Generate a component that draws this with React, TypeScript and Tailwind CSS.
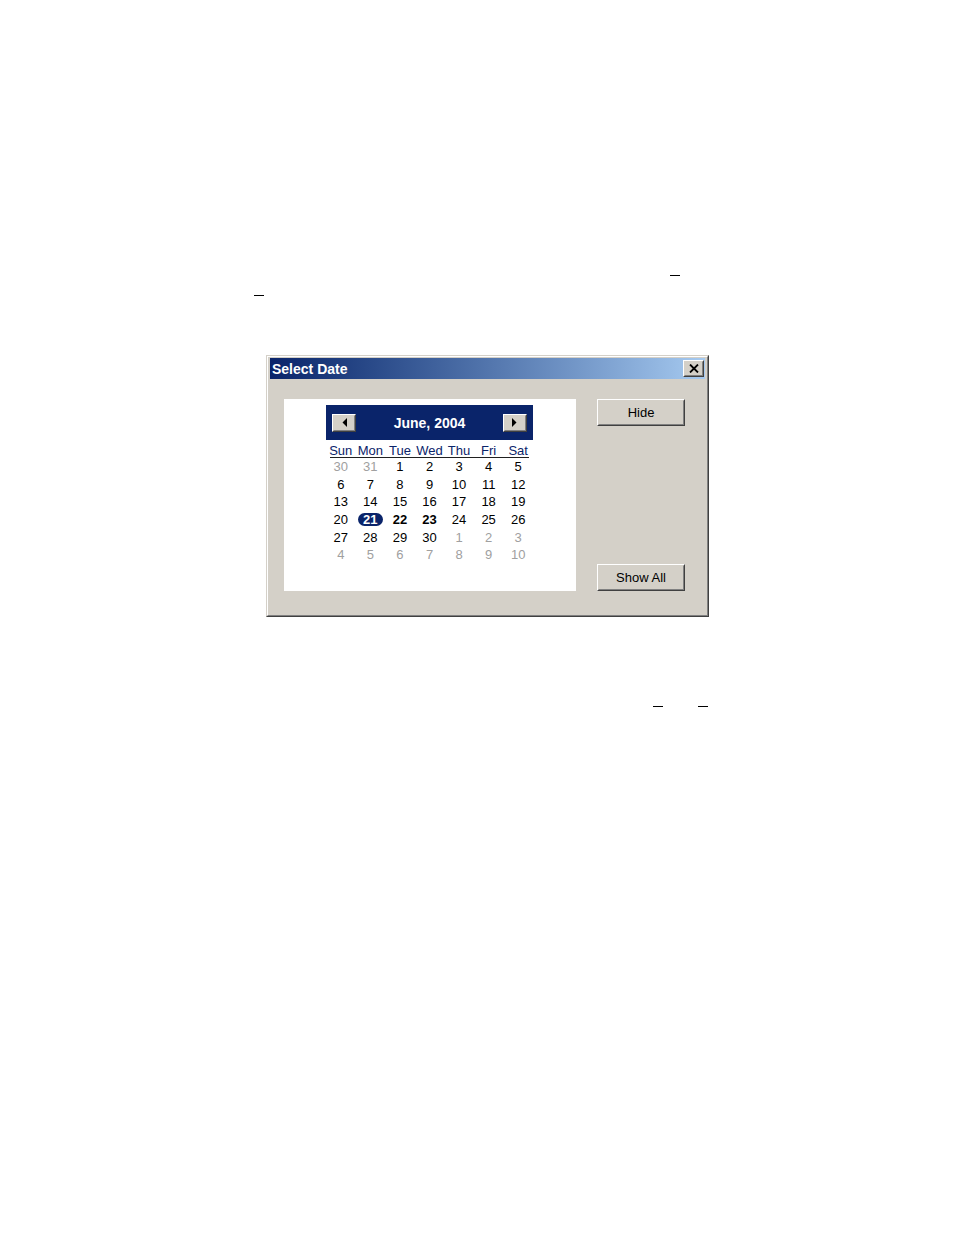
import React from "react";

const font = { fontFamily: '"Liberation Sans", Arial, sans-serif' };

function Btn3D({ children, className = "" }: { children: React.ReactNode; className?: string }) {
  return (
    <div className={`border border-t-white border-l-white border-b-[#404040] border-r-[#404040] bg-[#d4d0c8] ${className}`}>
      <div className="w-full h-full border border-t-[#d4d0c8] border-l-[#d4d0c8] border-b-[#808080] border-r-[#808080] flex items-center justify-center">
        {children}
      </div>
    </div>
  );
}

const weeks: { d: string; t: "g" | "n" | "b" | "s" }[][] = [
  [
    { d: "30", t: "g" }, { d: "31", t: "g" }, { d: "1", t: "n" }, { d: "2", t: "n" }, { d: "3", t: "n" }, { d: "4", t: "n" }, { d: "5", t: "n" },
  ],
  [
    { d: "6", t: "n" }, { d: "7", t: "n" }, { d: "8", t: "n" }, { d: "9", t: "n" }, { d: "10", t: "n" }, { d: "11", t: "n" }, { d: "12", t: "n" },
  ],
  [
    { d: "13", t: "n" }, { d: "14", t: "n" }, { d: "15", t: "n" }, { d: "16", t: "n" }, { d: "17", t: "n" }, { d: "18", t: "n" }, { d: "19", t: "n" },
  ],
  [
    { d: "20", t: "n" }, { d: "21", t: "s" }, { d: "22", t: "b" }, { d: "23", t: "b" }, { d: "24", t: "n" }, { d: "25", t: "n" }, { d: "26", t: "n" },
  ],
  [
    { d: "27", t: "n" }, { d: "28", t: "n" }, { d: "29", t: "n" }, { d: "30", t: "n" }, { d: "1", t: "g" }, { d: "2", t: "g" }, { d: "3", t: "g" },
  ],
  [
    { d: "4", t: "g" }, { d: "5", t: "g" }, { d: "6", t: "g" }, { d: "7", t: "g" }, { d: "8", t: "g" }, { d: "9", t: "g" }, { d: "10", t: "g" },
  ],
];

const dayNames = ["Sun", "Mon", "Tue", "Wed", "Thu", "Fri", "Sat"];

export default function App() {
  return (
    <div className="relative w-[954px] h-[1235px] bg-white overflow-hidden" style={font}>
      {/* stray marks */}
      <div className="absolute left-[670px] top-[275px] w-[10px] h-[1px] bg-black" />
      <div className="absolute left-[254px] top-[295px] w-[10px] h-[1px] bg-black" />
      <div className="absolute left-[653px] top-[706px] w-[10px] h-[1px] bg-black" />
      <div className="absolute left-[698px] top-[706px] w-[10px] h-[1px] bg-black" />

      <div className="pt-[355px] pl-[266px]">
        {/* dialog */}
        <div className="w-[443px] h-[262px] border border-t-[#d4d0c8] border-l-[#d4d0c8] border-b-[#404040] border-r-[#404040] bg-[#d4d0c8]">
          <div className="w-full h-full border border-t-white border-l-white border-b-[#808080] border-r-[#808080] pt-[1px] px-[2px] pb-[2px] flex flex-col">
            {/* title bar */}
            <div className="h-[21px] flex items-center justify-between bg-gradient-to-r from-[#0a246a] to-[#a6caf0] pl-[2px] pr-[1px]">
              <span className="text-white font-bold text-[14px] leading-none">Select Date</span>
              <Btn3D className="w-[21px] h-[17px]">
                <svg width="10" height="9" viewBox="0 0 10 9">
                  <path d="M1 0.5 L9 8.5 M9 0.5 L1 8.5" stroke="black" strokeWidth="1.8" />
                </svg>
              </Btn3D>
            </div>
            {/* body */}
            <div className="flex pt-[20px] pl-[14px]">
              {/* white panel */}
              <div className="w-[292px] h-[192px] bg-white flex justify-center pt-[6px]">
                <div className="w-[207px] -ml-[1px]">
                  {/* header */}
                  <div className="h-[35px] bg-[#0a246a] flex items-center justify-between px-[6px]">
                    <Btn3D className="w-[24px] h-[18px]">
                      <svg width="5" height="9" viewBox="0 0 5 9">
                        <path d="M5 0 L0.5 4.5 L5 9 Z" fill="black" />
                      </svg>
                    </Btn3D>
                    <span className="text-white font-bold text-[14px] leading-none">June, 2004</span>
                    <Btn3D className="w-[24px] h-[18px]">
                      <svg width="5" height="9" viewBox="0 0 5 9">
                        <path d="M0 0 L4.5 4.5 L0 9 Z" fill="black" />
                      </svg>
                    </Btn3D>
                  </div>
                  {/* day names */}
                  <div className="grid grid-cols-7 h-[17px] items-center text-[13px] text-[#0a246a] leading-none pt-[3px]">
                    {dayNames.map((n) => (
                      <div key={n} className="text-center">{n}</div>
                    ))}
                  </div>
                  <div className="mx-[4px] h-[1px] bg-[#202020]" />
                  <div className="grid grid-cols-7 auto-rows-[17.6px] items-center text-[13px] leading-none">
                    {weeks.flat().map((c, i) => (
                      <div key={i} className="flex justify-center">
                        {c.t === "s" ? (
                          <span className="bg-[#0a246a] text-white font-bold rounded-full px-[5px] h-[13px] flex items-center">{c.d}</span>
                        ) : (
                          <span
                            className={
                              c.t === "g"
                                ? "text-[#a0a0a0]"
                                : c.t === "b"
                                ? "text-black font-bold"
                                : "text-black"
                            }
                          >
                            {c.d}
                          </span>
                        )}
                      </div>
                    ))}
                  </div>
                </div>
              </div>
              {/* buttons */}
              <div className="ml-[21px] h-[192px] flex flex-col justify-between">
                <Btn3D className="w-[88px] h-[27px]">
                  <span className="text-[13px] text-black leading-none">Hide</span>
                </Btn3D>
                <Btn3D className="w-[88px] h-[27px]">
                  <span className="text-[13px] text-black leading-none">Show All</span>
                </Btn3D>
              </div>
            </div>
          </div>
        </div>
      </div>
    </div>
  );
}
